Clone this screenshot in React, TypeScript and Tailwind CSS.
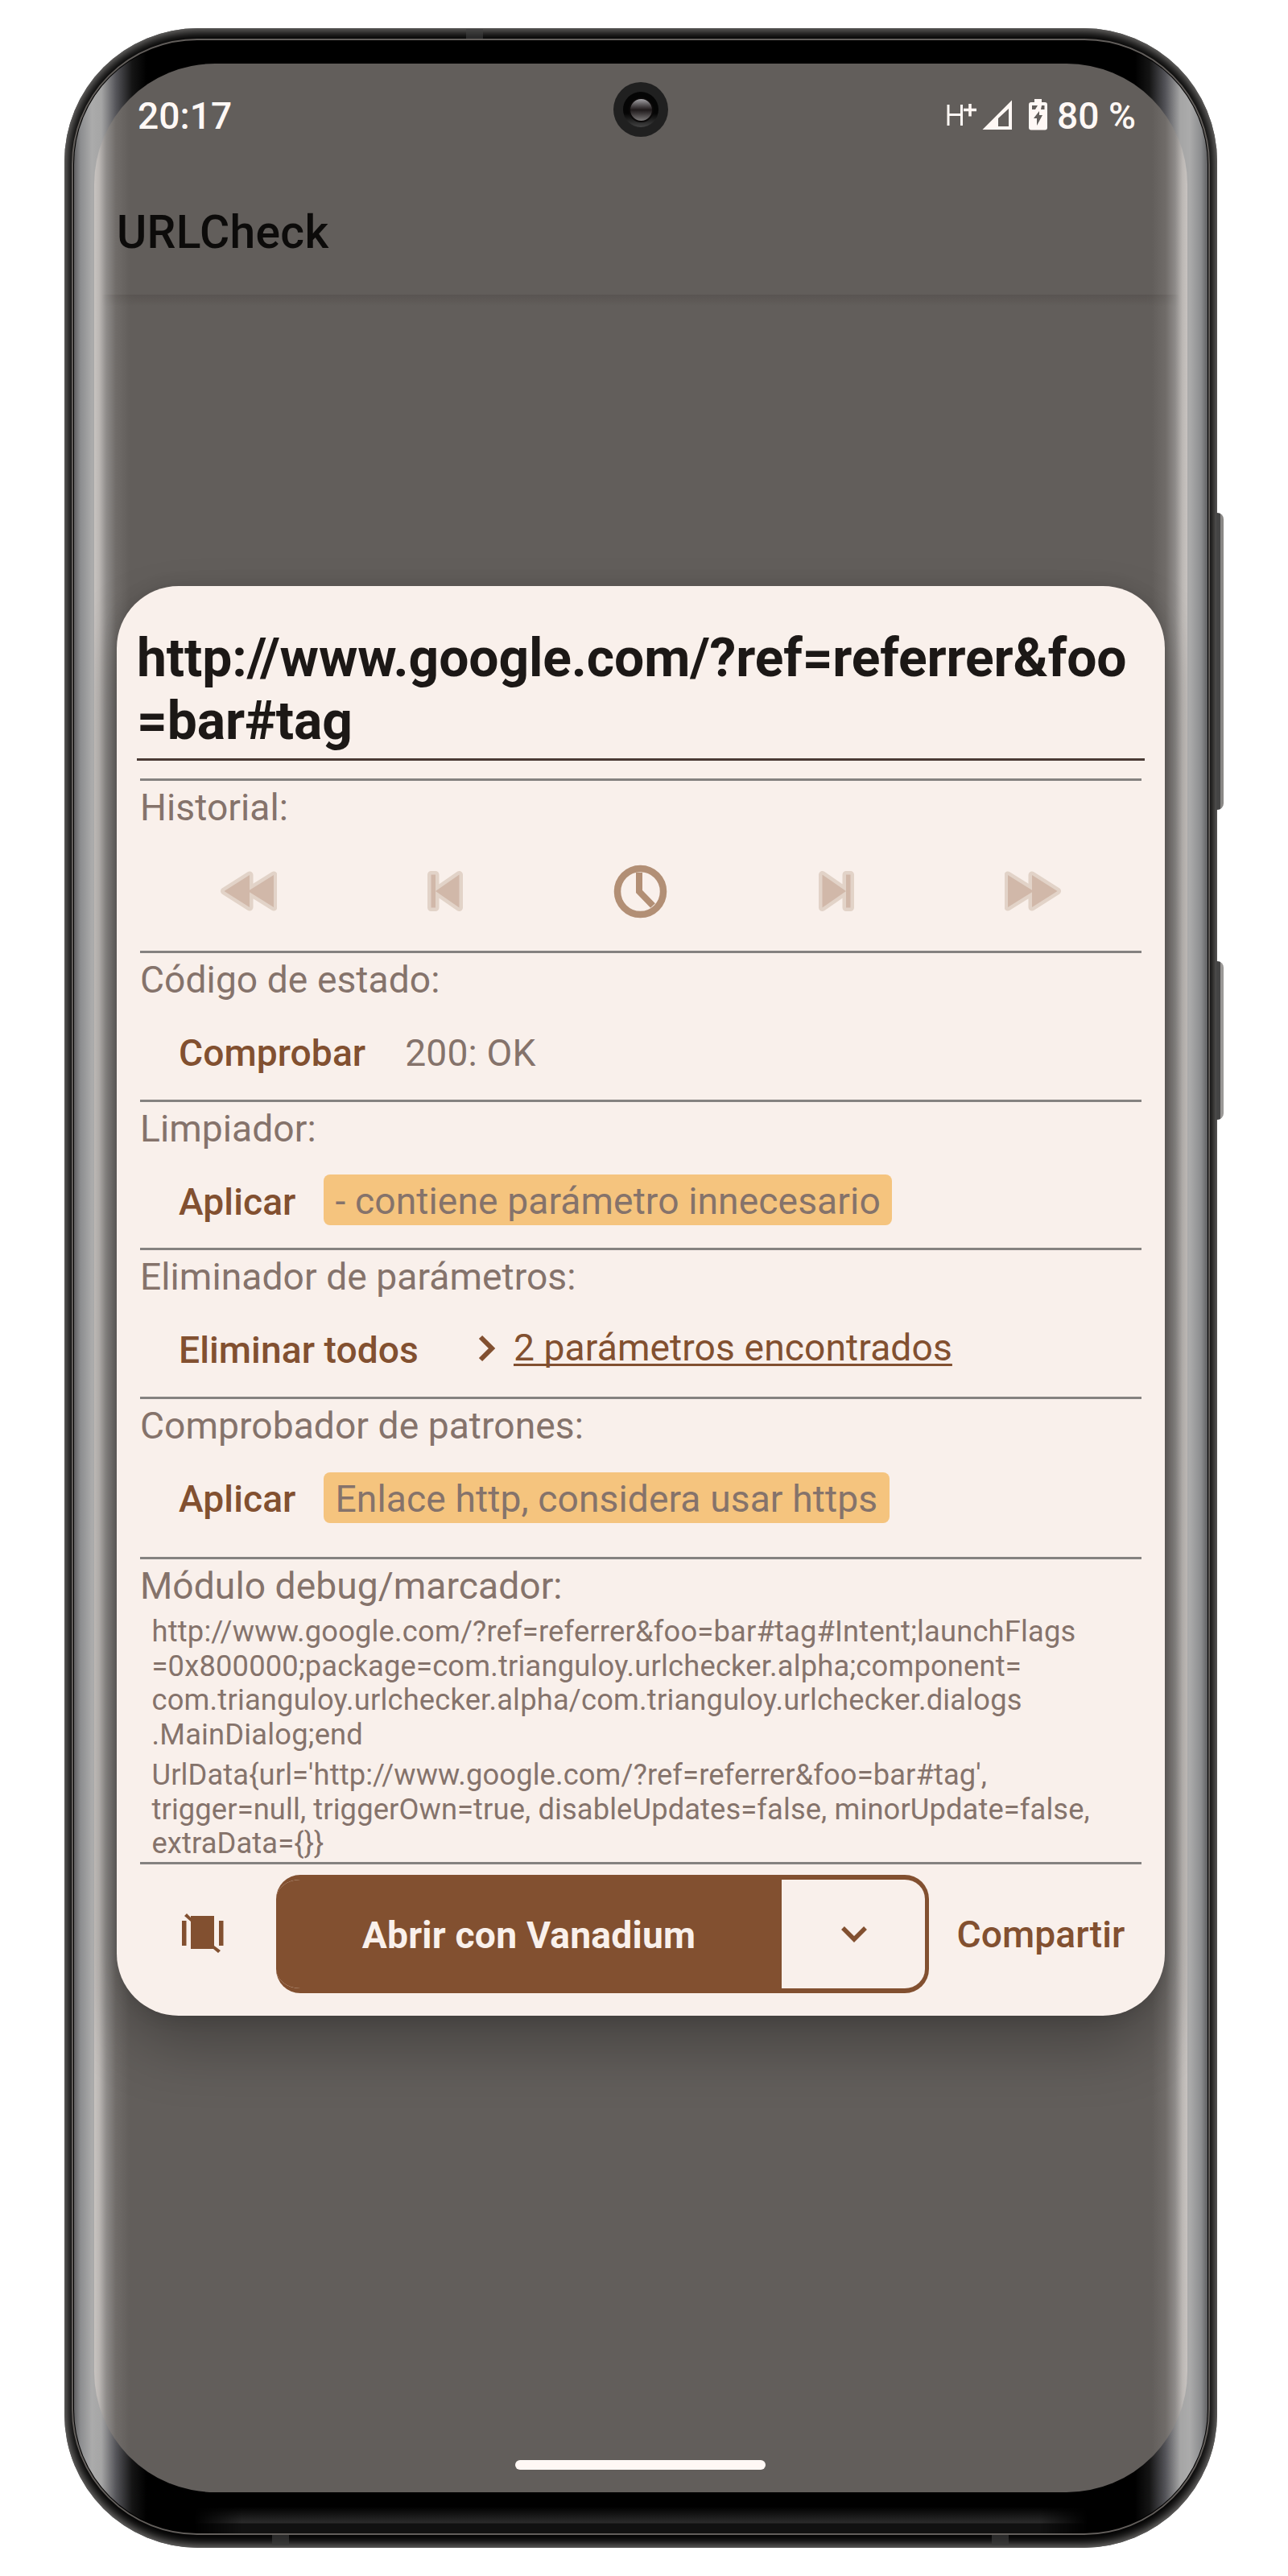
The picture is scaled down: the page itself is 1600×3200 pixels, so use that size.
import React from "react";

function Module({
  title,
  height,
  children,
}: {
  title: string;
  height: string;
  children: React.ReactNode;
}) {
  return (
    <section className={`flex shrink-0 flex-col border-t-[3px] border-[#858280] ${height}`}>
      <h2 className="mt-[6px] h-[54px] text-[46.2px] leading-[54px] tracking-[0.05px] text-[#85736b]">
        {title}
      </h2>
      {children}
    </section>
  );
}

function Row({ children }: { children: React.ReactNode }) {
  return <div className="flex h-[120px] items-center pt-[8px] pl-[48px]">{children}</div>;
}

function TextButton({ children }: { children: React.ReactNode }) {
  return (
    <button className="text-[46.2px] leading-[54px] font-medium tracking-[0.06px] whitespace-nowrap text-[#825030]">
      {children}
    </button>
  );
}

function Chip({ children, width }: { children: React.ReactNode; width: string }) {
  return (
    <span
      className={`relative top-[-2px] ml-[34px] h-[63px] rounded-[8px] bg-[#f5c47e] pl-[15px] text-[46.2px] leading-[67px] tracking-[0.1px] whitespace-nowrap text-[#85736b] ${width}`}
    >
      {children}
    </span>
  );
}

function Transport({ d }: { d: string }) {
  return (
    <svg viewBox="0 0 70 52" className="h-[52px] w-[70px]">
      <path d={d} fill="#e2d3c8" stroke="#e2d3c8" strokeWidth="9" strokeLinejoin="round" />
      <path d={d} fill="#d1b8a9" />
    </svg>
  );
}

const REWIND = "M4.500 26 36 6V46ZM34 26 66 6V46Z";
const FORWARD = "M65.500 26 34 6V46ZM36 26 4 6V46Z";
const PREVIOUS = "M17.500 5.500h5.500v41h-5.500zM23 26 52.500 5.500V46.500Z";
const NEXT = "M52.500 5.500H47v41h5.500zM47 26 17.500 5.500V46.500Z";

function StatusBar() {
  return (
    <div className="flex h-[113px] items-center justify-between pt-[17px] pr-[64px] pl-[54px] text-[46.2px] font-medium text-[#fff8f5]">
      <span className="leading-[54px]">20:17</span>
      <div className="flex items-center">
        <svg viewBox="0 0 38 28" className="mr-[6px] mb-[5px] h-[28px] w-[38px]" fill="none" stroke="currentColor">
          <path d="M2 2v26M18.500 2v26M2 14.500h16.500" strokeWidth="3" />
          <path d="M21 8.500h16M29 1v15.500" strokeWidth="3.600" />
        </svg>
        <svg viewBox="0 0 38 38" className="mr-[20px] mb-[3px] h-[38px] w-[38px]" fill="currentColor">
          <path fillRule="evenodd" d="M0.500 37 37 .5V37ZM20 33h13V11L20 23Z" />
        </svg>
        <svg viewBox="0 0 23 39" className="mr-[12px] mb-[3px] h-[39px] w-[23px]">
          <path
            fill="currentColor"
            d="M7 0h9v4h4a3 3 0 0 1 3 3v28.500a3 3 0 0 1-3 3H3a3 3 0 0 1-3-3V7a3 3 0 0 1 3-3h4z"
          />
          <path fill="#625e5b" d="M4 8h7L8 13H4zM16 8h3.500v5H15z" />
          <path fill="#625e5b" d="M13 15v5h4L10 33V24H6z" />
        </svg>
        <span className="leading-[54px]">80 %</span>
      </div>
    </div>
  );
}

function Camera() {
  return (
    <div className="absolute top-[67px] left-[682px] flex size-[68px] items-center justify-center rounded-full bg-[#202020]">
      <div className="flex size-[44px] items-center justify-center rounded-full bg-linear-to-b from-[#050505] from-60% to-[#444]">
        <div className="size-[31px] rounded-full border-2 border-[#0b0909] bg-linear-to-b from-[#a5a4a8] via-[#1f1a1b] via-50% to-[#7a7878]" />
      </div>
    </div>
  );
}

function Dialog() {
  return (
    <main className="mx-[28px] mt-[348px] flex h-[1775.5px] flex-col rounded-[77px] bg-[#f9f0eb] pt-[51px] shadow-[0_40px_80px_-8px_rgba(0,0,0,0.32),0_0_22px_rgba(0,0,0,0.12)]">
      <h1 className="mx-[25px] h-[166px] border-b-[3px] border-[#4a3b35] text-[66px] leading-[77.5px] font-bold tracking-[-0.14px] whitespace-nowrap text-[#1c1816]">
        http://www.google.com/?ref=referrer&amp;foo
        <br />
        =bar#tag
      </h1>

      <div className="mx-[29px] mt-[22px] flex flex-col">
        <Module title="Historial:" height="h-[214px]">
          <div className="flex h-[150px] justify-between px-[100px] pt-[50.5px]">
            <Transport d={REWIND} />
            <Transport d={PREVIOUS} />
            <svg viewBox="0 0 68 68" className="mt-[-8px] size-[68px]" fill="none" stroke="#b28f75">
              <circle cx="33.500" cy="34.500" r="28.500" strokeWidth="8.500" />
              <path d="M32 11V34.500L49 52" strokeWidth="8" />
            </svg>
            <Transport d={NEXT} />
            <Transport d={FORWARD} />
          </div>
        </Module>

        <Module title="Código de estado:" height="h-[184.5px]">
          <Row>
            <TextButton>Comprobar</TextButton>
            <span className="ml-[49px] text-[46.2px] leading-[54px] tracking-[0.15px] text-[#85736b]">200: OK</span>
          </Row>
        </Module>

        <Module title="Limpiador:" height="h-[184.5px]">
          <Row>
            <TextButton>Aplicar</TextButton>
            <Chip width="w-[706px]">- contiene parámetro innecesario</Chip>
          </Row>
        </Module>

        <Module title="Eliminador de parámetros:" height="h-[185px]">
          <Row>
            <TextButton>Eliminar todos</TextButton>
            <svg viewBox="0 0 22 34" className="relative top-[-2px] ml-[74px] h-[34px] w-[22px]">
              <path d="M3 3 17 17 3 31" fill="none" stroke="#825030" strokeWidth="6" />
            </svg>
            <a className="relative top-[-3px] ml-[22px] text-[46.2px] leading-[54px] tracking-[0.1px] text-[#825030] underline decoration-[3px] underline-offset-[4px] [text-decoration-skip-ink:none]">
              2 parámetros encontrados
            </a>
          </Row>
        </Module>

        <Module title="Comprobador de patrones:" height="h-[199px]">
          <Row>
            <TextButton>Aplicar</TextButton>
            <Chip width="w-[703px]">Enlace http, considera usar https</Chip>
          </Row>
        </Module>

        <Module title="Módulo debug/marcador:" height="h-[379px]">
          <div className="mt-[9px] flex flex-col gap-2 pl-[14.5px] text-[36.3px] leading-[42.5px] tracking-[0.19px] whitespace-nowrap text-[#85736b]">
            <p>
              http://www.google.com/?ref=referrer&amp;foo=bar#tag#Intent;launchFlags
              <br />
              =0x800000;package=com.trianguloy.urlchecker.alpha;component=
              <br />
              com.trianguloy.urlchecker.alpha/com.trianguloy.urlchecker.dialogs
              <br />
              .MainDialog;end
            </p>
            <p className="tracking-[0.12px]">
              UrlData&#123;url='http://www.google.com/?ref=referrer&amp;foo=bar#tag',
              <br />
              trigger=null, triggerOwn=true, disableUpdates=false, minorUpdate=false,
              <br />
              extraData=&#123;&#125;&#125;
            </p>
          </div>
        </Module>

        <footer className="flex h-[162px] border-t-[3px] border-[#858280] pt-[13px]">
          <svg viewBox="0 0 54 50" className="mt-[47.5px] ml-[51px] h-[50px] w-[54px] shrink-0" fill="#825030">
            <path d="M12 3h29v37l8 6-3 3-6-5H12V10L4 3l3-3 5 5zM1 9h5.500v31H1zM47 9h5.500v31H47z" />
          </svg>
          <div className="ml-[64px] flex h-[147px] w-[811px] shrink-0 overflow-hidden rounded-[30px] border-y-[6px] border-r-[5px] border-[#825030]">
            <button className="w-[628px] bg-[#825030] pt-[2px] text-center text-[46.2px] leading-[54px] font-bold tracking-[0.22px] text-[#f9f0eb]">
              Abrir con Vanadium
            </button>
            <button className="flex flex-1 items-center justify-center pl-[2px]">
              <svg viewBox="0 0 34 22" className="h-[22px] w-[34px]">
                <path d="M3 3 17 17 31 3" fill="none" stroke="#825030" strokeWidth="5.500" />
              </svg>
            </button>
          </div>
          <div className="mt-[47px] ml-[34.5px]">
            <TextButton>Compartir</TextButton>
          </div>
        </footer>
      </div>
    </main>
  );
}

export default function App() {
  return (
    <div className="h-[3200px] w-[1600px] overflow-hidden bg-white pt-[35px] pl-[80px] font-['Roboto',sans-serif]">
      {/* Metal frame */}
      <div className="relative h-[3130px] w-[1432px] rounded-[166px] bg-black p-[10px_9px] shadow-[inset_0_0_14px_3px_#868482]">
        {/* Side buttons */}
        <div className="absolute top-[602px] left-[1431px] h-[369px] w-[9px] rounded-r-[8px] bg-linear-to-r from-[#444] from-50% to-[#8a8886] to-60%" />
        <div className="absolute top-[1159px] left-[1431px] h-[197px] w-[9px] rounded-r-[8px] bg-linear-to-r from-[#444] from-50% to-[#9a9896] to-60%" />
        {/* Antenna bands */}
        <div className="absolute top-px left-[499px] h-[12px] w-[21px] bg-[#3f3f3f]/60" />
        <div className="absolute bottom-[3px] left-[258px] h-[13px] w-[21px] bg-[#3a3a3a]/70" />
        <div className="absolute bottom-[3px] left-[1152px] h-[13px] w-[21px] bg-[#3a3a3a]/70" />

        {/* Rim around the curved glass */}
        <div className="relative mt-[3px] h-[3101px] rounded-[156px] border-2 border-[#625e5b] bg-black p-[1px]">
          <div className="h-full rounded-[153px] bg-[linear-gradient(to_right,#606062_0,#8c8d8f_8px,#ababab_22px,#a5a5a5_34px,#55555a_52px,#151515_72px,#000_90px,#000_calc(100%-90px),#151515_calc(100%-72px),#55555a_calc(100%-52px),#a5a5a5_calc(100%-34px),#ababab_calc(100%-22px),#8c8d8f_calc(100%-8px),#606062_100%)] pt-[28px]">
            {/* Display */}
            <div className="mx-auto flex h-[3017px] w-[1358px] flex-col overflow-hidden rounded-[150px] bg-[#625e5b] bg-[linear-gradient(to_right,#c8c3c0_0,#bcb8b5_6px,#8f8c8a_15px,#706c69_27px,#625e5b_44px,#625e5b_calc(100%-44px),#706c69_calc(100%-27px),#8f8c8a_calc(100%-15px),#bcb8b5_calc(100%-6px),#c8c3c0_100%)]">
              <StatusBar />
              <header className="flex h-[174px] items-center pt-[20px] pl-[28px]">
                <span className="text-[57px] leading-[66px] font-medium tracking-[0.3px] text-[#0c0b0a]">URLCheck</span>
              </header>
              <div className="mx-[10px] h-[14px] bg-linear-to-b from-[#544f4c]/60 to-transparent [mask-image:linear-gradient(to_right,transparent,black_40px,black_calc(100%-40px),transparent)]" />
              <Dialog />
              <div className="mt-auto mb-[28px] ml-[523px] h-[12px] w-[311px] rounded-full bg-[#fff8f5]" />
            </div>
          </div>
          {/* Reflection on the lower glass edge */}
          <div className="absolute bottom-0 left-[150px] h-[33px] w-[1110px] bg-[linear-gradient(to_bottom,transparent,#2b2b2b_20px,#111_21px,#111_100%)] [mask-image:linear-gradient(to_right,transparent,black_60px,black_calc(100%-60px),transparent)]" />
        </div>
        <Camera />
      </div>
    </div>
  );
}
